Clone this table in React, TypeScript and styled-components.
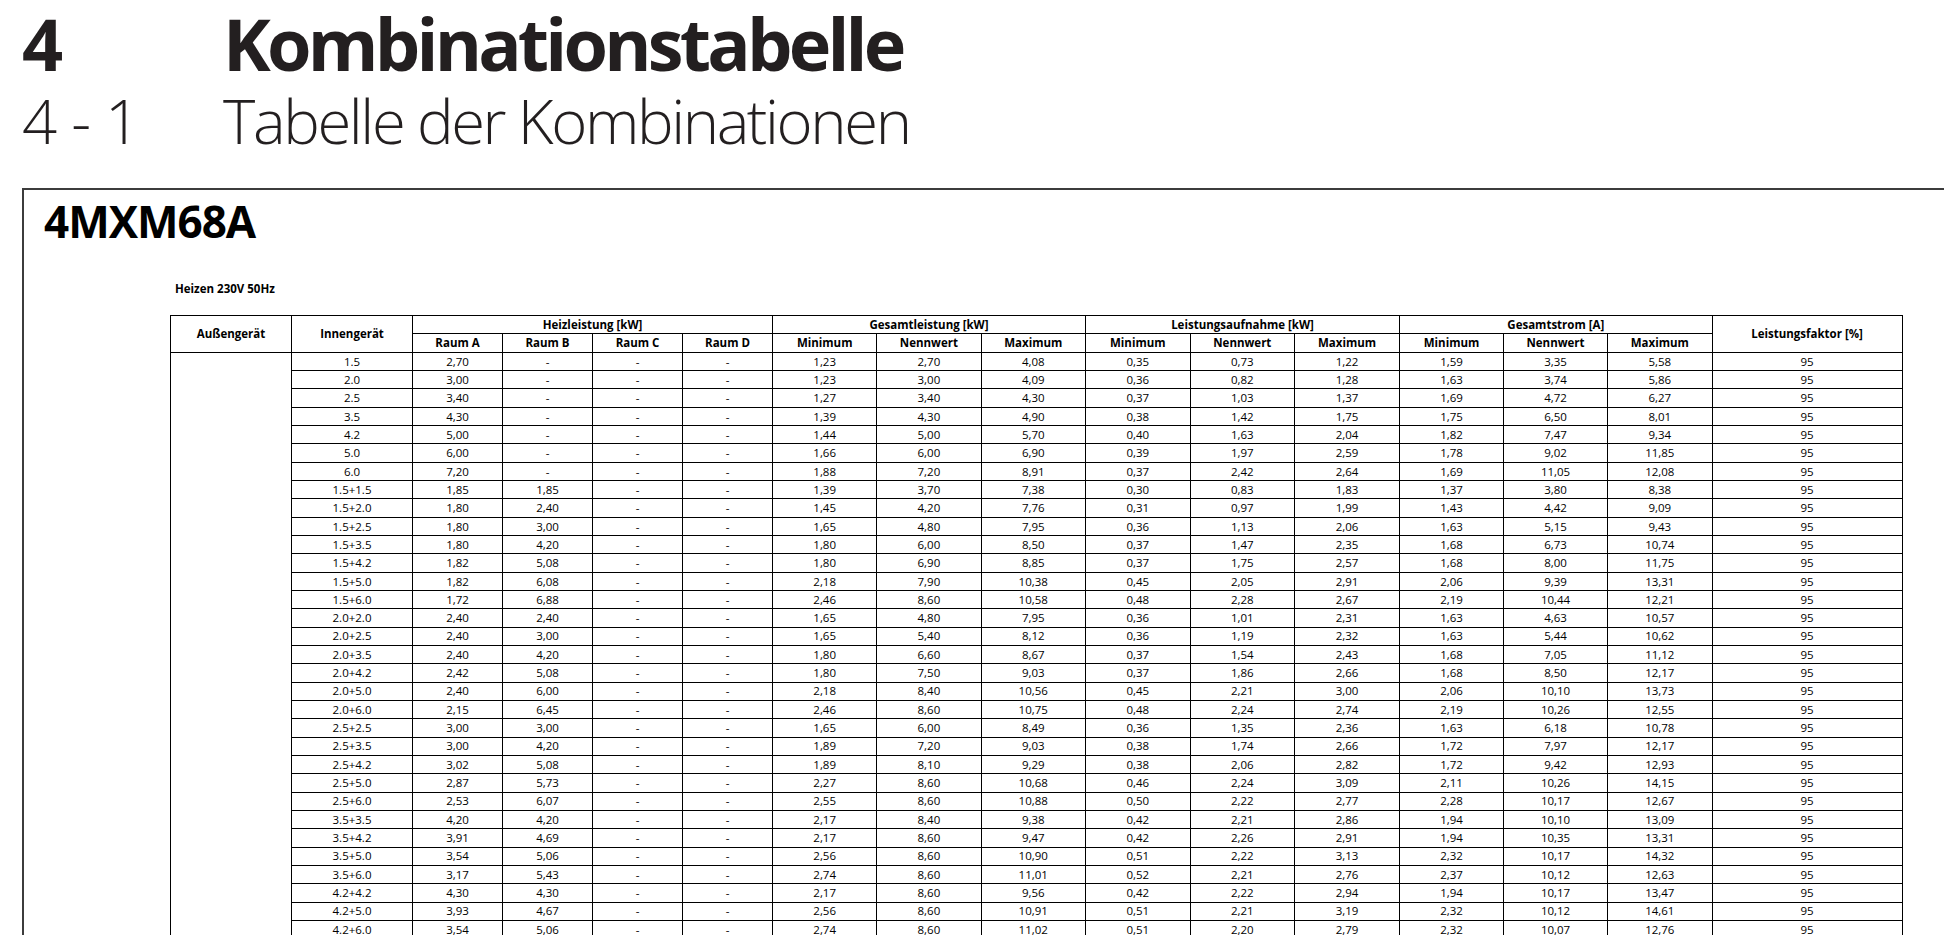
import React from 'react';
import styled, { createGlobalStyle } from 'styled-components';

const GlobalStyle = createGlobalStyle`
  html, body {
    margin: 0;
    padding: 0;
    background: #ffffff;
    overflow: hidden;
  }
  body {
    font-family: "Open Sans", "Noto Sans", sans-serif;
    color: #231f20;
  }
`;

// Spaltenbreiten in px: Außengerät, Innengerät, Raum A-D, 3x3 Messwerte, Leistungsfaktor
const columnWidths = [121, 121, 90, 90, 90, 90, 104.3, 104.2, 104.5, 104.6, 104.4, 105, 104, 104, 104.5, 190];

// Innengerät, Raum A, Raum B, Gesamtleistung (min/nenn/max), Leistungsaufnahme, Gesamtstrom
const rows: string[][] = [
  ['1.5', '2,70', '-', '1,23', '2,70', '4,08', '0,35', '0,73', '1,22', '1,59', '3,35', '5,58'],
  ['2.0', '3,00', '-', '1,23', '3,00', '4,09', '0,36', '0,82', '1,28', '1,63', '3,74', '5,86'],
  ['2.5', '3,40', '-', '1,27', '3,40', '4,30', '0,37', '1,03', '1,37', '1,69', '4,72', '6,27'],
  ['3.5', '4,30', '-', '1,39', '4,30', '4,90', '0,38', '1,42', '1,75', '1,75', '6,50', '8,01'],
  ['4.2', '5,00', '-', '1,44', '5,00', '5,70', '0,40', '1,63', '2,04', '1,82', '7,47', '9,34'],
  ['5.0', '6,00', '-', '1,66', '6,00', '6,90', '0,39', '1,97', '2,59', '1,78', '9,02', '11,85'],
  ['6.0', '7,20', '-', '1,88', '7,20', '8,91', '0,37', '2,42', '2,64', '1,69', '11,05', '12,08'],
  ['1.5+1.5', '1,85', '1,85', '1,39', '3,70', '7,38', '0,30', '0,83', '1,83', '1,37', '3,80', '8,38'],
  ['1.5+2.0', '1,80', '2,40', '1,45', '4,20', '7,76', '0,31', '0,97', '1,99', '1,43', '4,42', '9,09'],
  ['1.5+2.5', '1,80', '3,00', '1,65', '4,80', '7,95', '0,36', '1,13', '2,06', '1,63', '5,15', '9,43'],
  ['1.5+3.5', '1,80', '4,20', '1,80', '6,00', '8,50', '0,37', '1,47', '2,35', '1,68', '6,73', '10,74'],
  ['1.5+4.2', '1,82', '5,08', '1,80', '6,90', '8,85', '0,37', '1,75', '2,57', '1,68', '8,00', '11,75'],
  ['1.5+5.0', '1,82', '6,08', '2,18', '7,90', '10,38', '0,45', '2,05', '2,91', '2,06', '9,39', '13,31'],
  ['1.5+6.0', '1,72', '6,88', '2,46', '8,60', '10,58', '0,48', '2,28', '2,67', '2,19', '10,44', '12,21'],
  ['2.0+2.0', '2,40', '2,40', '1,65', '4,80', '7,95', '0,36', '1,01', '2,31', '1,63', '4,63', '10,57'],
  ['2.0+2.5', '2,40', '3,00', '1,65', '5,40', '8,12', '0,36', '1,19', '2,32', '1,63', '5,44', '10,62'],
  ['2.0+3.5', '2,40', '4,20', '1,80', '6,60', '8,67', '0,37', '1,54', '2,43', '1,68', '7,05', '11,12'],
  ['2.0+4.2', '2,42', '5,08', '1,80', '7,50', '9,03', '0,37', '1,86', '2,66', '1,68', '8,50', '12,17'],
  ['2.0+5.0', '2,40', '6,00', '2,18', '8,40', '10,56', '0,45', '2,21', '3,00', '2,06', '10,10', '13,73'],
  ['2.0+6.0', '2,15', '6,45', '2,46', '8,60', '10,75', '0,48', '2,24', '2,74', '2,19', '10,26', '12,55'],
  ['2.5+2.5', '3,00', '3,00', '1,65', '6,00', '8,49', '0,36', '1,35', '2,36', '1,63', '6,18', '10,78'],
  ['2.5+3.5', '3,00', '4,20', '1,89', '7,20', '9,03', '0,38', '1,74', '2,66', '1,72', '7,97', '12,17'],
  ['2.5+4.2', '3,02', '5,08', '1,89', '8,10', '9,29', '0,38', '2,06', '2,82', '1,72', '9,42', '12,93'],
  ['2.5+5.0', '2,87', '5,73', '2,27', '8,60', '10,68', '0,46', '2,24', '3,09', '2,11', '10,26', '14,15'],
  ['2.5+6.0', '2,53', '6,07', '2,55', '8,60', '10,88', '0,50', '2,22', '2,77', '2,28', '10,17', '12,67'],
  ['3.5+3.5', '4,20', '4,20', '2,17', '8,40', '9,38', '0,42', '2,21', '2,86', '1,94', '10,10', '13,09'],
  ['3.5+4.2', '3,91', '4,69', '2,17', '8,60', '9,47', '0,42', '2,26', '2,91', '1,94', '10,35', '13,31'],
  ['3.5+5.0', '3,54', '5,06', '2,56', '8,60', '10,90', '0,51', '2,22', '3,13', '2,32', '10,17', '14,32'],
  ['3.5+6.0', '3,17', '5,43', '2,74', '8,60', '11,01', '0,52', '2,21', '2,76', '2,37', '10,12', '12,63'],
  ['4.2+4.2', '4,30', '4,30', '2,17', '8,60', '9,56', '0,42', '2,22', '2,94', '1,94', '10,17', '13,47'],
  ['4.2+5.0', '3,93', '4,67', '2,56', '8,60', '10,91', '0,51', '2,21', '3,19', '2,32', '10,12', '14,61'],
  ['4.2+6.0', '3,54', '5,06', '2,74', '8,60', '11,02', '0,51', '2,20', '2,79', '2,32', '10,07', '12,76'],
];

const measureGroups = ['Gesamtleistung [kW]', 'Leistungsaufnahme [kW]', 'Gesamtstrom [A]'];
const rooms = ['Raum A', 'Raum B', 'Raum C', 'Raum D'];

const App: React.FC = () => {
  return (
    <>
      <GlobalStyle />
      <Page>
        <ChapterTitle>
          <HeadingNumber>4</HeadingNumber>
          <span>Kombinationstabelle</span>
        </ChapterTitle>
        <SectionTitle>
          <HeadingNumber>4 - 1</HeadingNumber>
          <span>Tabelle der Kombinationen</span>
        </SectionTitle>

        <Frame>
          <ModelName>4MXM68A</ModelName>
          <ModeLabel>Heizen 230V 50Hz</ModeLabel>

          <DataTable>
            <colgroup>
              {columnWidths.map((w, i) => (
                <col key={i} style={{ width: w }} />
              ))}
            </colgroup>
            <thead>
              <tr>
                <HeadCell rowSpan={2}>Außengerät</HeadCell>
                <HeadCell rowSpan={2}>Innengerät</HeadCell>
                <HeadCell colSpan={4}>Heizleistung [kW]</HeadCell>
                {measureGroups.map((g) => (
                  <HeadCell key={g} colSpan={3}>{g}</HeadCell>
                ))}
                <HeadCell rowSpan={2}>Leistungsfaktor [%]</HeadCell>
              </tr>
              <tr>
                {rooms.map((r) => (
                  <HeadCell key={r}>{r}</HeadCell>
                ))}
                {measureGroups.map((g) => (
                  <React.Fragment key={g}>
                    <HeadCell>Minimum</HeadCell>
                    <HeadCell>Nennwert</HeadCell>
                    <HeadCell>Maximum</HeadCell>
                  </React.Fragment>
                ))}
              </tr>
            </thead>
            <tbody>
              {rows.map((row, i) => {
                const [unit, roomA, roomB, ...values] = row;
                return (
                  <tr key={unit}>
                    {i === 0 && <Cell rowSpan={rows.length} />}
                    <Cell>{unit}</Cell>
                    <Cell>{roomA}</Cell>
                    <Cell>{roomB}</Cell>
                    <Cell>-</Cell>
                    <Cell>-</Cell>
                    {values.map((v, j) => (
                      <Cell key={j}>{v}</Cell>
                    ))}
                    <Cell>95</Cell>
                  </tr>
                );
              })}
            </tbody>
          </DataTable>
        </Frame>
      </Page>
    </>
  );
};

const Page = styled.div`
  padding: 7px 0 0 22px;
`;

const ChapterTitle = styled.h1`
  display: flex;
  align-items: baseline;
  margin: 0;
  font-family: "Open Sans", "Noto Sans", sans-serif;
  font-weight: 700;
  font-size: 72px;
  line-height: 72px;
  letter-spacing: -3.8px;
  color: #231f20;
`;

const SectionTitle = styled.h2`
  display: flex;
  align-items: baseline;
  margin: 10px 0 0 0;
  font-family: "Open Sans", "Noto Sans", sans-serif;
  font-weight: 300;
  font-size: 61.6px;
  line-height: 62px;
  letter-spacing: -2.4px;
  color: #231f20;
`;

const HeadingNumber = styled.span`
  width: 201px;
  flex-shrink: 0;
  letter-spacing: -1px;
`;

const Frame = styled.section`
  width: 2000px;
  margin-top: 37px;
  padding: 9px 0 60px 20px;
  border: 2px solid #3c3c3c;
`;

const ModelName = styled.div`
  font-family: "Open Sans", "Noto Sans", sans-serif;
  font-weight: 700;
  font-size: 44px;
  line-height: 44px;
  letter-spacing: -1px;
  color: #000000;
`;

const ModeLabel = styled.div`
  margin: 39px 0 0 131px;
  font-family: "Open Sans", "Noto Sans", sans-serif;
  font-weight: 700;
  font-size: 11.5px;
  line-height: 14px;
  color: #000000;
`;

const DataTable = styled.table`
  margin: 19px 0 0 126px;
  width: 1732px;
  table-layout: fixed;
  border-collapse: separate;
  border-spacing: 0;
  border-top: 1px solid #000000;
  border-left: 1px solid #000000;
  font-family: "Open Sans", "Noto Sans", sans-serif;
  font-size: 11.5px;
  color: #000000;
`;

const Cell = styled.td`
  box-sizing: border-box;
  height: 18.33px;
  padding: 0;
  border-right: 1px solid #000000;
  border-bottom: 1px solid #000000;
  text-align: center;
  vertical-align: middle;
  line-height: 1;
  white-space: nowrap;
`;

const HeadCell = styled(Cell).attrs({ as: 'th' })`
  font-weight: 700;
`;

export default App;
